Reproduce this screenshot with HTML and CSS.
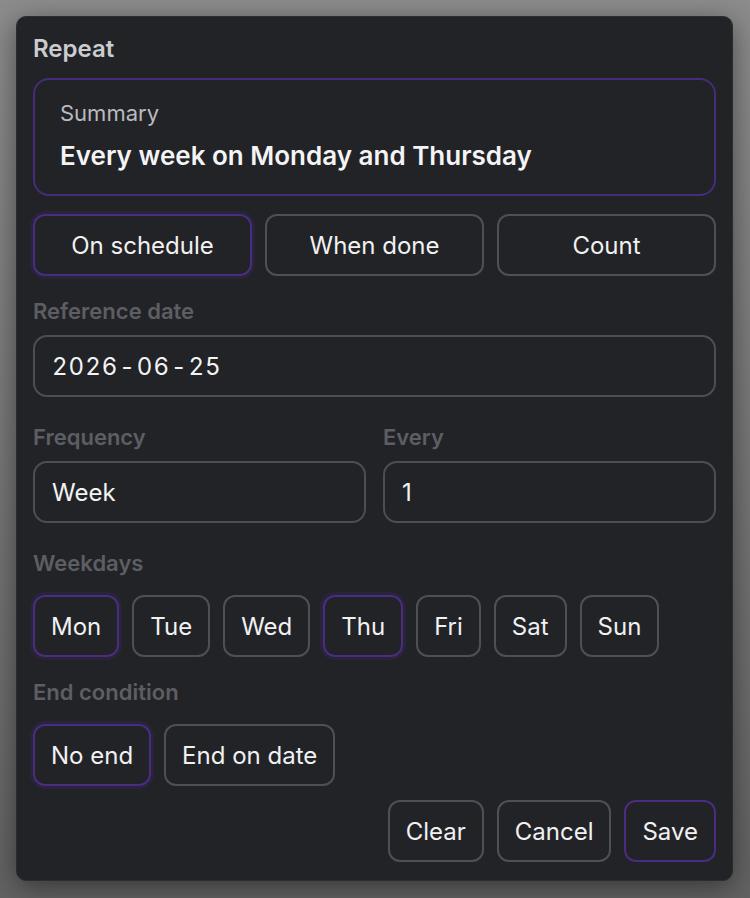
FILE: index.html
```html
<!DOCTYPE html>
<html lang="en">
<head>
  <meta charset="UTF-8">
  <meta name="viewport" content="width=device-width, initial-scale=1.0">
  <title>Repeat</title>
  <link rel="stylesheet" href="styles.css">
</head>
<body>
  <div class="dialog">
    <h2 class="dialog-title">Repeat</h2>

    <div class="summary">
      <div class="summary-label">Summary</div>
      <div class="summary-text">Every week on Monday and Thursday</div>
    </div>

    <div class="mode-tabs">
      <button class="chip active">On schedule</button>
      <button class="chip">When done</button>
      <button class="chip">Count</button>
    </div>

    <div class="field first">
      <div class="field-label">Reference date</div>
      <div class="input date-input">
        <span>2026</span><span class="sep">-</span><span>06</span><span class="sep">-</span><span>25</span>
      </div>
    </div>

    <div class="field-row">
      <div class="field">
        <div class="field-label">Frequency</div>
        <div class="input">Week</div>
      </div>
      <div class="field">
        <div class="field-label">Every</div>
        <div class="input">1</div>
      </div>
    </div>

    <div class="field">
      <div class="field-label">Weekdays</div>
      <div class="chip-row">
        <button class="chip active">Mon</button>
        <button class="chip">Tue</button>
        <button class="chip">Wed</button>
        <button class="chip active">Thu</button>
        <button class="chip">Fri</button>
        <button class="chip">Sat</button>
        <button class="chip">Sun</button>
      </div>
    </div>

    <div class="field after-chips">
      <div class="field-label">End condition</div>
      <div class="chip-row">
        <button class="chip active">No end</button>
        <button class="chip">End on date</button>
      </div>
    </div>

    <div class="dialog-actions">
      <button class="chip">Clear</button>
      <button class="chip">Cancel</button>
      <button class="chip primary">Save</button>
    </div>
  </div>
</body>
</html>
```

FILE: styles.css
```css
body {
  margin: 0;
  padding: 16px;
  min-height: 898px;
  box-sizing: border-box;
  background: linear-gradient(#8c8c8c, #626262);
  font-family: Inter, "Noto Sans", sans-serif;
}
.dialog {
  width: 717px;
  box-sizing: border-box;
  padding: 18px 16px;
  background-color: #222327;
  border: 1px solid #2c2d31;
  border-radius: 10px;
  box-shadow: 0 6px 28px rgba(0, 0, 0, 0.45);
}
.dialog-title {
  margin: 0;
  font-size: 24px;
  line-height: 28px;
  font-weight: 600;
  color: #cbccd0;
}
.summary {
  margin-top: 15px;
  height: 118px;
  box-sizing: border-box;
  padding: 20px 25px 0;
  border: 2px solid #472c7c;
  border-radius: 16px;
}
.summary-label {
  font-size: 22px;
  line-height: 26px;
  color: #b9babe;
}
.summary-text {
  margin-top: 15px;
  font-size: 26px;
  line-height: 30px;
  font-weight: 600;
  color: #f4f4f5;
}
.mode-tabs {
  display: grid;
  grid-template-columns: repeat(3, 1fr);
  gap: 13px;
  margin-top: 18px;
}
.chip {
  height: 62px;
  box-sizing: border-box;
  padding: 0 16px;
  background-color: transparent;
  border: 2px solid #4f5055;
  border-radius: 12px;
  color: #f1f1f2;
  font-family: inherit;
  font-size: 24px;
  cursor: pointer;
}
.chip.active {
  border-color: #4a2d80;
  box-shadow: 0 0 0 3px #29243a;
}
.chip.primary {
  border-color: #4a2d80;
}
.field {
  margin-top: 27px;
}
.field.first {
  margin-top: 22px;
}
.field.after-chips {
  margin-top: 22px;
}
.field-label {
  margin-bottom: 11px;
  font-size: 22px;
  line-height: 26px;
  font-weight: 600;
  color: #5d5e63;
}
.input {
  display: flex;
  align-items: center;
  height: 62px;
  box-sizing: border-box;
  padding: 0 17px;
  border: 2px solid #4d4e53;
  border-radius: 14px;
  font-size: 24px;
  color: #f3f3f4;
}
.date-input {
  font-variant-numeric: tabular-nums;
  letter-spacing: 1px;
}
.date-input .sep {
  margin: 0 1px;
}
.field-row {
  display: grid;
  grid-template-columns: 1fr 1fr;
  gap: 17px;
}
.chip-row {
  display: flex;
  gap: 13px;
  padding-top: 8px;
}
.dialog-actions {
  display: flex;
  justify-content: flex-end;
  gap: 13px;
  margin-top: 14px;
}
```
